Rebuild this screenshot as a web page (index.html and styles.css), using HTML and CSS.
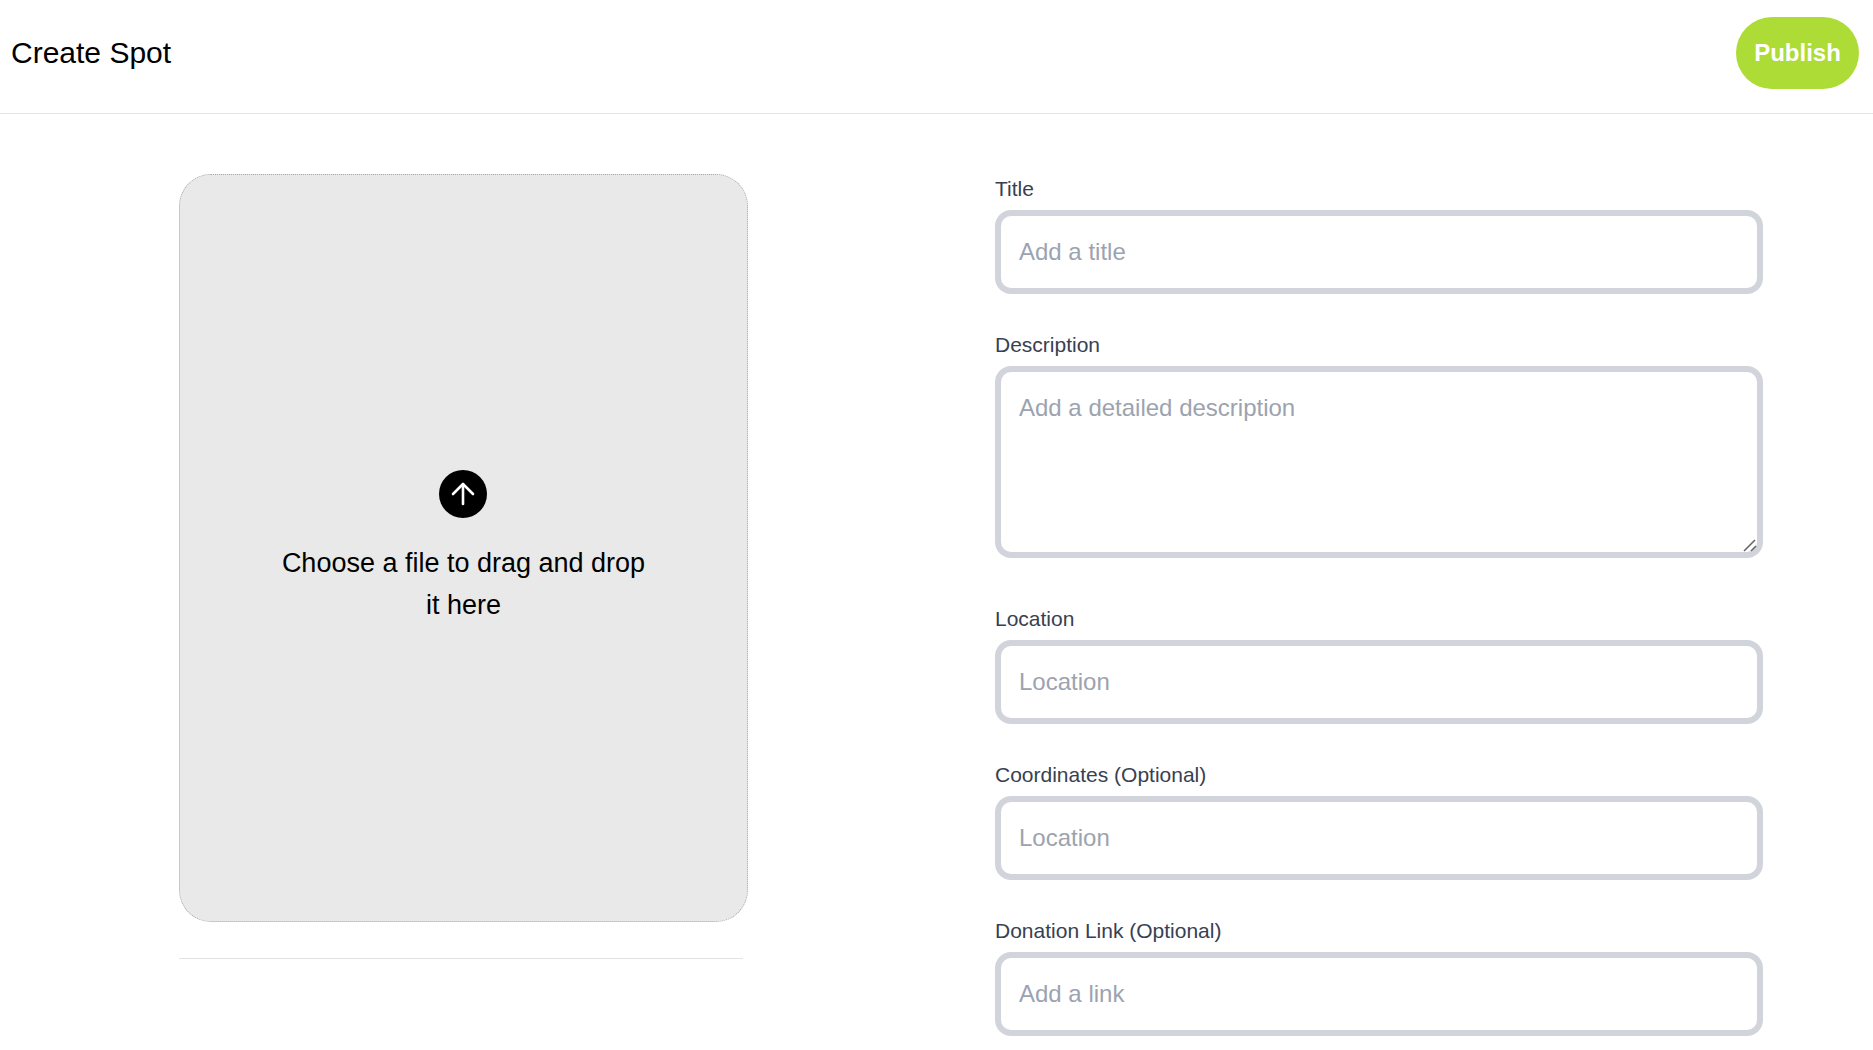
FILE: index.html
```html
<!DOCTYPE html>
<html lang="en">
<head>
<meta charset="utf-8">
<title>Create Spot</title>
<link rel="stylesheet" href="styles.css">
</head>
<body>
<header class="topbar">
  <h1 class="page-title">Create Spot</h1>
  <button class="publish" type="button">Publish</button>
</header>
<main class="layout">
  <section class="media">
    <div class="dropzone">
      <span class="upload-icon">
        <svg width="26" height="26" viewBox="0 0 26 26" fill="none" stroke="#fff" stroke-width="2.6" stroke-linecap="round" stroke-linejoin="round"><path d="M13 23V3.500"/><path d="M3 13 13 3 23 13"/></svg>
      </span>
      <p class="drop-text">Choose a file to drag and drop it here</p>
    </div>
    <hr class="divider">
  </section>
  <form class="fields">
    <label class="field"><span class="field-label">Title</span><input class="control" placeholder="Add a title"></label>
    <label class="field"><span class="field-label">Description</span>
      <span class="area-wrap">
        <textarea class="control control-area" placeholder="Add a detailed description"></textarea>
        <svg class="resize-grip" width="14" height="14" viewBox="0 0 14 14" fill="none" stroke="#666" stroke-width="1.600"><path d="M1 13 12 2"/><path d="M8 13l5-5"/></svg>
      </span>
    </label>
    <label class="field"><span class="field-label">Location</span><input class="control" placeholder="Location"></label>
    <label class="field"><span class="field-label">Coordinates (Optional)</span><input class="control" placeholder="Location"></label>
    <label class="field"><span class="field-label">Donation Link (Optional)</span><input class="control" placeholder="Add a link"></label>
  </form>
</main>
</body>
</html>
```
FILE: styles.css
```css
* { box-sizing: border-box; }
html, body { margin: 0; height: 1050px; overflow: hidden; background: #fff; }
body { font-family: "Liberation Sans", Arial, sans-serif; color: #000; }

.topbar {
  height: 114px;
  display: flex;
  align-items: center;
  justify-content: space-between;
  padding: 0 14px 7px 11px;
  border-bottom: 1px solid #e5e5e5;
}
.page-title { margin: 0; font-size: 30px; font-weight: 400; line-height: 36px; }
.publish {
  width: 123px;
  height: 72px;
  border: 0;
  border-radius: 36px;
  background: #addc36;
  color: #fff;
  font: 700 24px "Liberation Sans", Arial, sans-serif;
  padding: 0;
}

.layout { display: flex; padding: 60px 110px 0 179px; }
.media { width: 569px; margin-right: 247px; flex: none; }
.dropzone {
  height: 748px;
  display: flex;
  flex-direction: column;
  align-items: center;
  justify-content: center;
  background: #e9e9e9;
  border: 1px dotted #a6a6ac;
  border-radius: 32px;
}
.upload-icon {
  width: 48px;
  height: 48px;
  margin-right: 1px;
  border-radius: 50%;
  background: #000;
  display: flex;
  align-items: center;
  justify-content: center;
}
.drop-text {
  width: 380px;
  margin: 24px 0 0;
  font-size: 27px;
  line-height: 42px;
  text-align: center;
}
.divider { width: 564px; margin: 36px 0 0; border: 0; border-top: 1px solid #e2e2e2; }

.fields { width: 768px; flex: none; display: flex; flex-direction: column; gap: 36px; }
.field { display: flex; flex-direction: column; }
.field-label { font-size: 21px; line-height: 24px; color: #374151; margin: 3px 0 9px; display: block; }
.control {
  display: block;
  width: 100%;
  height: 84px;
  padding: 0 18px;
  border: 6px solid #d1d5db;
  border-radius: 16px;
  background: #fff;
  font: 24px "Liberation Sans", Arial, sans-serif;
  color: #111;
  outline: none;
}
.control::placeholder { color: #9ca3af; opacity: 1; }
.area-wrap { display: block; position: relative; margin-bottom: 10px; }
.control-area { height: 192px; padding: 22px 18px 18px; resize: none; }
.resize-grip { position: absolute; right: 6px; bottom: 6px; }
```
